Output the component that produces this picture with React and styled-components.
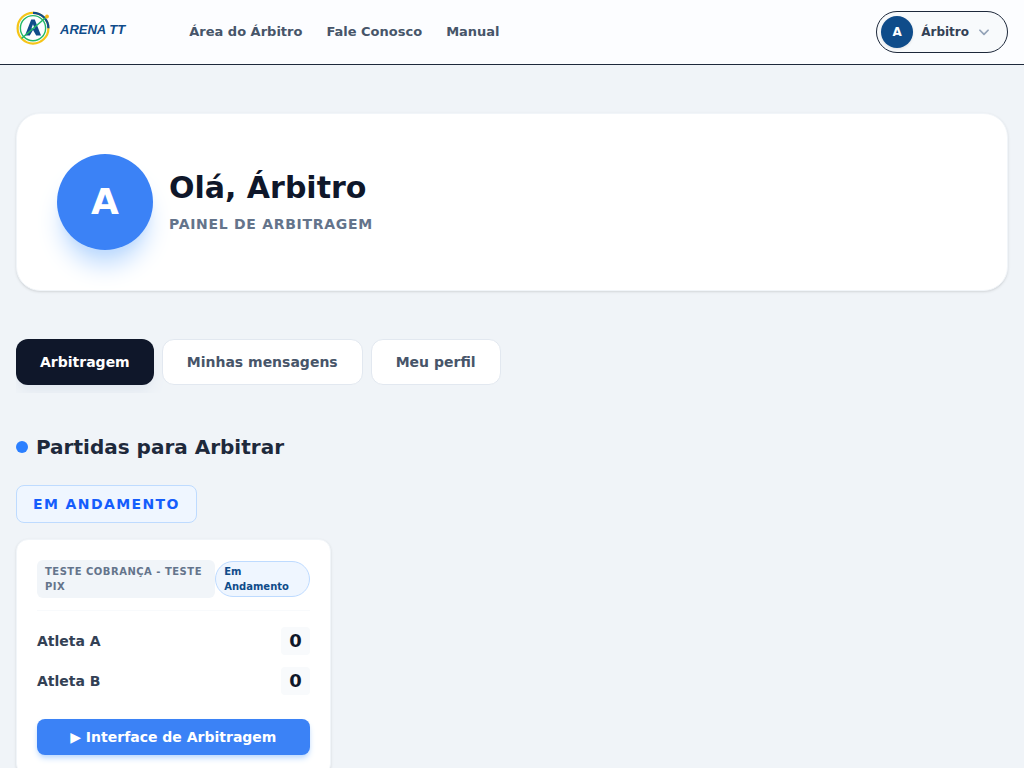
import React from "react";
import styled, { createGlobalStyle } from "styled-components";

const GlobalStyle = createGlobalStyle`
  *, *::before, *::after { box-sizing: border-box; }
  body {
    margin: 0;
    background: #f0f4f8;
    color: #1e293b;
    font-family: "DejaVu Sans", sans-serif;
    font-size: 14px;
    line-height: 20px;
  }
  h1, h2, h3, p, ul { margin: 0; padding: 0; }
  button { font: inherit; cursor: pointer; }
`;

const Header = styled.header`
  display: flex;
  align-items: center;
  justify-content: space-between;
  height: 65px;
  padding: 0 16px;
  background: #fcfdff;
  border-bottom: 1px solid #1e293b;
`;

const HeaderStart = styled.div`
  display: flex;
  align-items: center;
  gap: 64px;
`;

const Brand = styled.a`
  display: flex;
  align-items: center;
  gap: 8px;
  padding-bottom: 4px;
  color: #0f4c8a;
  font-family: "Liberation Sans", Arial, sans-serif;
  font-size: 13px;
  font-style: italic;
  font-weight: 700;
  text-decoration: none;
`;

const BrandMark = styled.svg`
  width: 36px;
  height: 36px;
  overflow: visible;
`;

const Nav = styled.nav`
  display: flex;
  gap: 24px;
`;

const NavLink = styled.a`
  color: #475569;
  font-size: 13px;
  font-weight: 700;
  text-decoration: none;
`;

const UserButton = styled.button`
  display: flex;
  align-items: center;
  gap: 8px;
  padding: 4px 16px 4px 4px;
  border: 1px solid #1e293b;
  border-radius: 21px;
  background: #f8fafc;
  color: #334155;
  font-size: 12px;
  font-weight: 700;
`;

const Chevron = styled.svg`
  width: 14px;
  height: 14px;
  color: #94a3b8;
`;

const Avatar = styled.span`
  display: flex;
  align-items: center;
  justify-content: center;
  flex: none;
  width: ${({ $large }) => ($large ? "96px" : "32px")};
  height: ${({ $large }) => ($large ? "96px" : "32px")};
  border-radius: 50%;
  background: ${({ $large }) => ($large ? "#3b82f6" : "#0f4c8a")};
  box-shadow: ${({ $large }) =>
    $large
      ? "0 20px 25px -5px #bfdbfe, 0 8px 10px -6px #bfdbfe"
      : "0 1px 3px rgba(0, 0, 0, 0.1)"};
  color: #fff;
  font-size: ${({ $large }) => ($large ? "36px" : "12px")};
  font-weight: 700;
`;

const Main = styled.main`
  padding: 48px 16px;
`;

const Welcome = styled.section`
  display: flex;
  align-items: center;
  gap: 16px;
  margin-bottom: 48px;
  padding: 40px;
  border: 1px solid #f1f5f9;
  border-radius: 24px;
  background: #fff;
  box-shadow: 0 1px 3px rgba(0, 0, 0, 0.1), 0 1px 2px -1px rgba(0, 0, 0, 0.1);
`;

const WelcomeTitle = styled.h1`
  margin-bottom: 8px;
  color: #0f172a;
  font-size: 30px;
  font-weight: 700;
  line-height: 36px;
`;

const WelcomeRole = styled.p`
  color: #64748b;
  font-weight: 700;
  letter-spacing: 0.7px;
  text-transform: uppercase;
`;

const Tabs = styled.div`
  display: flex;
  gap: 8px;
  margin-bottom: 40px;
  padding-bottom: 8px;
  overflow-x: auto;
`;

const Tab = styled.button`
  flex: none;
  padding: 12px 24px;
  border: ${({ $active }) => ($active ? "0" : "1px solid #e2e8f0")};
  border-radius: 12px;
  background: ${({ $active }) => ($active ? "#0f172a" : "#fff")};
  box-shadow: ${({ $active }) =>
    $active ? "0 10px 15px -3px #e2e8f0, 0 4px 6px -4px #e2e8f0" : "none"};
  color: ${({ $active }) => ($active ? "#fff" : "#475569")};
  font-weight: 700;
`;

const SectionTitle = styled.h2`
  display: flex;
  align-items: center;
  gap: 8px;
  margin-bottom: 24px;
  color: #1e293b;
  font-size: 20px;
  font-weight: 700;
  line-height: 28px;

  &::before {
    content: "";
    width: 12px;
    height: 12px;
    border-radius: 50%;
    background: #2b7fff;
  }
`;

const GroupTitle = styled.h3`
  width: fit-content;
  margin-bottom: 16px;
  padding: 8px 16px;
  border: 1px solid #bedbff;
  border-radius: 8px;
  background: #eff6ff;
  color: #155dfc;
  font-size: 14px;
  font-weight: 700;
  letter-spacing: 1.4px;
  text-transform: uppercase;
`;

const MatchGrid = styled.div`
  display: grid;
  grid-template-columns: repeat(3, 1fr);
  gap: 24px;

  @media (max-width: 900px) {
    grid-template-columns: 1fr;
  }
`;

const MatchCard = styled.article`
  padding: 20px;
  border: 1px solid #f1f5f9;
  border-radius: 12px;
  background: #fff;
  box-shadow: 0 1px 3px rgba(0, 0, 0, 0.1), 0 1px 2px -1px rgba(0, 0, 0, 0.1);
`;

const MatchHeader = styled.div`
  display: flex;
  align-items: center;
  justify-content: space-between;
  margin-bottom: 16px;
  padding-bottom: 12px;
  border-bottom: 1px solid #f8fafc;
  font-size: 10px;
  font-weight: 700;
  line-height: 15px;
`;

const Tournament = styled.span`
  padding: 4px 8px;
  border-radius: 6px;
  background: #f1f5f9;
  color: #64748b;
  letter-spacing: 0.5px;
  text-transform: uppercase;
`;

const Status = styled.span`
  padding: 2px 8px;
  border: 1px solid #bedbff;
  border-radius: 18px;
  background: #eff6ff;
  color: #0f4c8a;
`;

const Players = styled.ul`
  display: grid;
  gap: 12px;
  margin-bottom: 24px;
  list-style: none;
`;

const Player = styled.li`
  display: flex;
  align-items: center;
  justify-content: space-between;
  color: #334155;
  font-weight: 700;
`;

const Score = styled.span`
  padding: 0 8px;
  border-radius: 4px;
  background: #f8fafc;
  color: #0f172a;
  font-size: 18px;
  line-height: 28px;
`;

const PrimaryButton = styled.button`
  width: 100%;
  padding: 8px;
  border: 0;
  border-radius: 8px;
  background: #3b82f6;
  box-shadow: 0 4px 6px -1px #bfdbfe, 0 2px 4px -2px #bfdbfe;
  color: #fff;
  font-weight: 700;
`;

const navItems = ["Área do Árbitro", "Fale Conosco", "Manual"];
const tabs = ["Arbitragem", "Minhas mensagens", "Meu perfil"];
const players = [
  { name: "Atleta A", score: 0 },
  { name: "Atleta B", score: 0 },
];

function Logo() {
  return (
    <BrandMark viewBox="0 1 36 36" fill="none" aria-hidden="true">
      <circle cx="17" cy="17.2" r="15.4" stroke="#f5c518" strokeWidth="2.2" />
      <path d="M17 1.8A15.4 15.4 0 0 1 32.4 17.2" stroke="#0f4c8a" strokeWidth="2.2" />
      <circle cx="17" cy="17.2" r="12.6" stroke="#22b866" strokeWidth="1.4" />
      <path
        fill="#0f4c8a"
        fillRule="evenodd"
        d="M15.2 8.4h3.6l6.2 16h-4.8L17 19l-3.2 5.4H9zM17 13.2l-1.6 4.2h3.2z"
      />
      <path d="M5.5 27.5L31 5.5" stroke="#22b866" strokeWidth="1.6" />
      <circle cx="31" cy="5.5" r="1.9" fill="#f5b618" />
    </BrandMark>
  );
}

export default function App() {
  return (
    <>
      <GlobalStyle />
      <Header>
        <HeaderStart>
          <Brand href="#">
            <Logo />
            ARENA TT
          </Brand>
          <Nav>
            {navItems.map((item) => (
              <NavLink href="#" key={item}>{item}</NavLink>
            ))}
          </Nav>
        </HeaderStart>
        <UserButton type="button">
          <Avatar>A</Avatar>
          Árbitro
          <Chevron viewBox="0 0 24 24" fill="none" aria-hidden="true">
            <path
              d="M19 9l-7 7-7-7"
              stroke="currentColor"
              strokeWidth="3"
              strokeLinecap="round"
              strokeLinejoin="round"
            />
          </Chevron>
        </UserButton>
      </Header>
      <Main>
        <Welcome>
          <Avatar $large>A</Avatar>
          <div>
            <WelcomeTitle>Olá, Árbitro</WelcomeTitle>
            <WelcomeRole>Painel de Arbitragem</WelcomeRole>
          </div>
        </Welcome>
        <Tabs role="tablist">
          {tabs.map((tab, i) => (
            <Tab type="button" role="tab" aria-selected={i === 0} $active={i === 0} key={tab}>
              {tab}
            </Tab>
          ))}
        </Tabs>
        <section>
          <SectionTitle>Partidas para Arbitrar</SectionTitle>
          <GroupTitle>Em Andamento</GroupTitle>
          <MatchGrid>
            <MatchCard>
              <MatchHeader>
                <Tournament>Teste Cobrança - Teste Pix</Tournament>
                <Status>Em Andamento</Status>
              </MatchHeader>
              <Players>
                {players.map(({ name, score }) => (
                  <Player key={name}>
                    {name}
                    <Score>{score}</Score>
                  </Player>
                ))}
              </Players>
              <PrimaryButton type="button">▶ Interface de Arbitragem</PrimaryButton>
            </MatchCard>
          </MatchGrid>
        </section>
      </Main>
    </>
  );
}
